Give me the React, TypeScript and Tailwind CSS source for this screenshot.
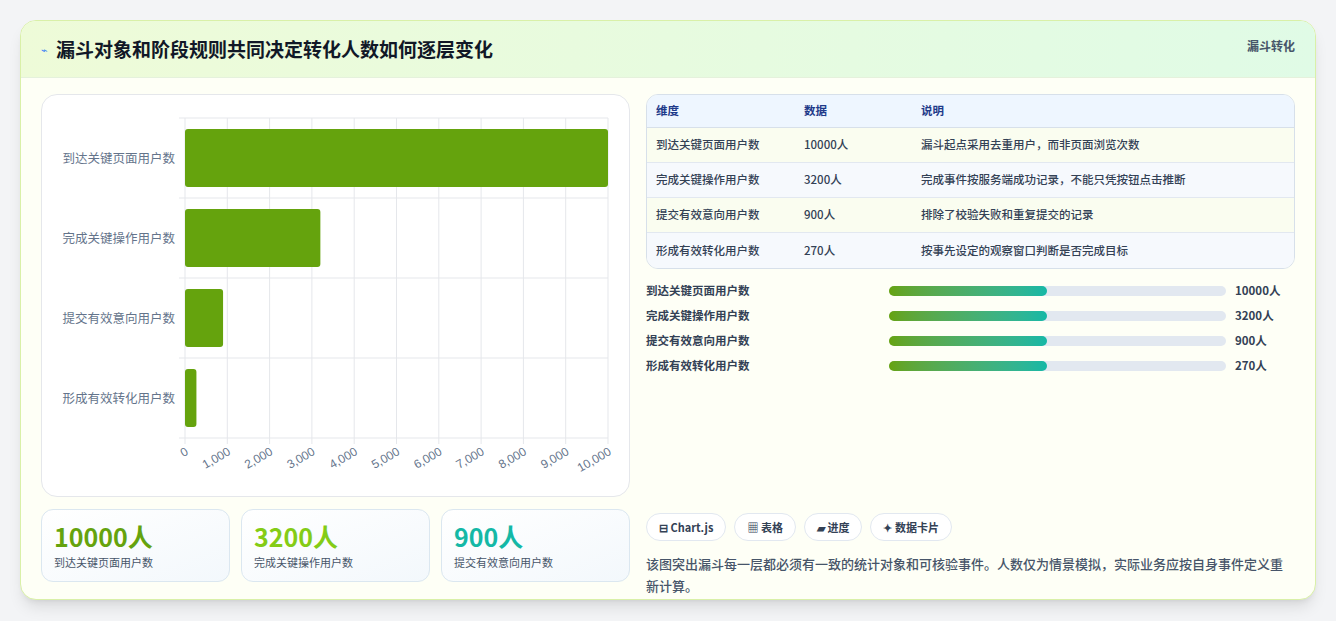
import React from "react";

const font = { fontFamily: '"Noto Sans CJK SC", "Noto Sans", sans-serif' };

const rows = [
  { name: "到达关键页面用户数", value: 10000, desc: "漏斗起点采用去重用户，而非页面浏览次数" },
  { name: "完成关键操作用户数", value: 3200, desc: "完成事件按服务端成功记录，不能只凭按钮点击推断" },
  { name: "提交有效意向用户数", value: 900, desc: "排除了校验失败和重复提交的记录" },
  { name: "形成有效转化用户数", value: 270, desc: "按事先设定的观察窗口判断是否完成目标" },
];

const Chart = () => {
  const x0 = 143, w = 423, y0 = 23, h = 320;
  const ticks = Array.from({ length: 11 }, (_, i) => i * 1000);
  return (
    <svg width="589" height="403" viewBox="0 0 589 403">
      {ticks.map((t, i) => (
        <line key={t} x1={x0 + (w * i) / 10} x2={x0 + (w * i) / 10} y1={y0} y2={y0 + h + 6} stroke="#e5e7eb" />
      ))}
      {[0, 1, 2, 3, 4].map((i) => (
        <line key={i} x1={x0 - 6} x2={x0 + w} y1={y0 + i * 80} y2={y0 + i * 80} stroke="#e5e7eb" />
      ))}
      {rows.map((r, i) => (
        <g key={r.name}>
          <rect x={x0} y={y0 + i * 80 + 11} width={Math.max((w * r.value) / 10000, 4)} height={58} rx={3} fill="#65a30d" />
          <text x={x0 - 10} y={y0 + i * 80 + 45} textAnchor="end" fontSize="12.5" fill="#64748b" style={font}>{r.name}</text>
        </g>
      ))}
      {ticks.map((t, i) => (
        <text key={t} transform={`translate(${x0 + (w * i) / 10 + 4},${y0 + h + 16}) rotate(-30)`} textAnchor="end" fontSize="12" fill="#64748b" style={{ fontFamily: '"Liberation Sans", sans-serif' }}>
          {t.toLocaleString("en-US")}
        </text>
      ))}
    </svg>
  );
};

export default function App() {
  return (
    <div className="w-[1336px] h-[621px] bg-[#f3f4f6] pt-5 px-5" style={font}>
      <div className="w-[1296px] h-[580px] rounded-2xl border border-[#d9f0a8] bg-[#fefff6] shadow-lg overflow-hidden">
        <div className="h-[57px] flex items-center justify-between px-5 bg-gradient-to-r from-[#eefbd8] to-[#e0fbe6] border-b border-[#e5f1dc]">
          <div className="flex items-center gap-2">
            <span className="text-[11px] text-[#3b82f6]">⌁</span>
            <h1 className="text-[19px] font-bold text-[#111827]">漏斗对象和阶段规则共同决定转化人数如何逐层变化</h1>
          </div>
          <span className="self-start mt-4 text-[12px] font-semibold text-[#475569]">漏斗转化</span>
        </div>
        <div className="flex gap-4 px-5 pt-4">
          <div className="w-[589px] flex flex-col gap-3">
            <div className="h-[403px] rounded-2xl border border-[#e5e7eb] bg-white">
              <Chart />
            </div>
            <div className="flex gap-[11px]">
              {rows.slice(0, 3).map((r, i) => (
                <div key={r.name} className="flex-1 h-[73px] rounded-xl border border-[#dbe7f0] bg-gradient-to-br from-white to-[#f3f8fc] px-3 pt-2">
                  <div className={`text-[25px] font-bold leading-[36px] ${["text-[#65a30d]", "text-[#84cc16]", "text-[#14b8a6]"][i]}`}>{r.value}人</div>
                  <div className="text-[11px] text-[#475569]">{r.name}</div>
                </div>
              ))}
            </div>
          </div>
          <div className="w-[651px] flex flex-col">
            <div className="rounded-xl border border-[#d7e0ea] overflow-hidden text-[11.5px]">
              <div className="flex h-[33px] items-center bg-[#eef6ff] border-b border-[#d7e0ea] font-semibold text-[#1e3a8a]">
                <div className="w-[157px] pl-[9px]">维度</div>
                <div className="w-[117px]">数据</div>
                <div>说明</div>
              </div>
              {rows.map((r, i) => (
                <div key={r.name} className={`flex h-[35px] items-center text-[#334155] font-medium ${i % 2 ? "bg-[#f6f9fd]" : "bg-[#fafdf0]"} ${i < 3 ? "border-b border-[#e2e8f0]" : ""}`}>
                  <div className="w-[157px] pl-[9px]">{r.name}</div>
                  <div className="w-[117px]">{r.value}人</div>
                  <div>{r.desc}</div>
                </div>
              ))}
            </div>
            <div className="flex flex-col mt-[9px]">
              {rows.map((r) => (
                <div key={r.name} className="flex items-center h-[25px] text-[11.5px] font-semibold text-[#334155]">
                  <div className="w-[243px]">{r.name}</div>
                  <div className="w-[337px] h-[10px] rounded-full bg-[#e2e8f0]">
                    <div className="w-[158px] h-full rounded-full bg-gradient-to-r from-[#65a30d] to-[#14b8a6]" />
                  </div>
                  <div className="ml-[9px]">{r.value}人</div>
                </div>
              ))}
            </div>
            <div className="flex gap-2 mt-[135px]">
              {["⊟ Chart.js", "▦ 表格", "▰ 进度", "✦ 数据卡片"].map((c) => (
                <span key={c} className="h-[28px] px-3 flex items-center rounded-full border border-[#e2e8f0] bg-white text-[11px] font-semibold text-[#334155]">{c}</span>
              ))}
            </div>
            <p className="mt-3 text-[13px] leading-[22px] text-[#475569] font-medium">该图突出漏斗每一层都必须有一致的统计对象和可核验事件。人数仅为情景模拟，实际业务应按自身事件定义重新计算。</p>
          </div>
        </div>
      </div>
    </div>
  );
}
